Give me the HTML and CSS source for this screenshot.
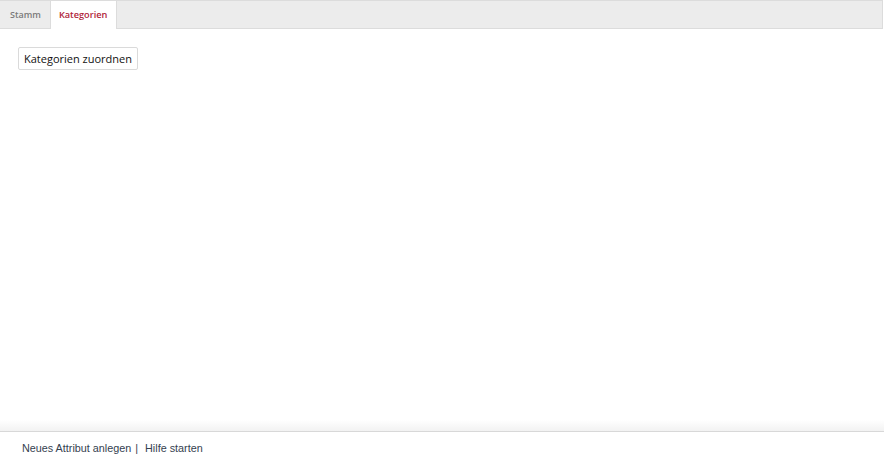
FILE: index.html
```html
<!DOCTYPE html>
<html lang="de">
<head>
<meta charset="utf-8">
<title>Kategorien</title>
<link rel="stylesheet" href="styles.css">
</head>
<body>
<div class="page">
  <div class="tabs">
    <div class="tab">Stamm</div>
    <div class="tab active">Kategorien</div>
  </div>
  <div class="content">
    <button class="btn" type="button">Kategorien zuordnen</button>
  </div>
  <div class="footer">
    <span class="link">Neues Attribut anlegen</span><span class="sep">|</span><span class="link">Hilfe starten</span>
  </div>
</div>
</body>
</html>
```

FILE: styles.css
```css
html, body {
  margin: 0;
  padding: 0;
  height: 100%;
  background: #fff;
}
.page {
  height: 100%;
  display: flex;
  flex-direction: column;
}
.tabs {
  display: flex;
  margin-right: 1px;
  background: #ececec;
  border-top: 1px solid #dcdcdc;
  border-right: 1px solid #dcdcdc;
  border-bottom: 1px solid #dcdcdc;
  height: 27px;
  padding-left: 1px;
  font-family: "Open Sans", sans-serif;
  font-size: 9px;
  font-weight: 600;
}
.tab {
  padding: 0 8px;
  line-height: 27px;
  color: #7a7a7a;
  border-left: 1px solid transparent;
  border-right: 1px solid transparent;
}
.tab.active {
  background: #fff;
  color: #b0243a;
  padding: 0 8.5px 0 8px;
  border-left-color: #dcdcdc;
  border-right-color: #dcdcdc;
  height: 28px;
  font-size: 9.2px;
}
.content {
  flex: 1;
  padding: 18px 18px;
}
.btn {
  font-family: "Open Sans", sans-serif;
  font-size: 11px;
  color: #111;
  background: #fff;
  border: 1px solid #dadada;
  border-radius: 2px;
  padding: 0 5px;
  height: 23px;
  line-height: 21px;
}
.footer {
  position: relative;
  border-top: 1px solid #d8d8d8;
  height: 33px;
  padding-left: 22px;
  font-family: "Liberation Sans", Arial, sans-serif;
  font-size: 10.8px;
  color: #34414f;
  line-height: 33px;
}
.footer::before {
  content: "";
  position: absolute;
  left: 0;
  right: 0;
  top: -12px;
  height: 11px;
  background: linear-gradient(to bottom, rgba(240,240,240,0), #f2f2f2);
}
.sep {
  margin: 0 7px 0 4px;
}
```
